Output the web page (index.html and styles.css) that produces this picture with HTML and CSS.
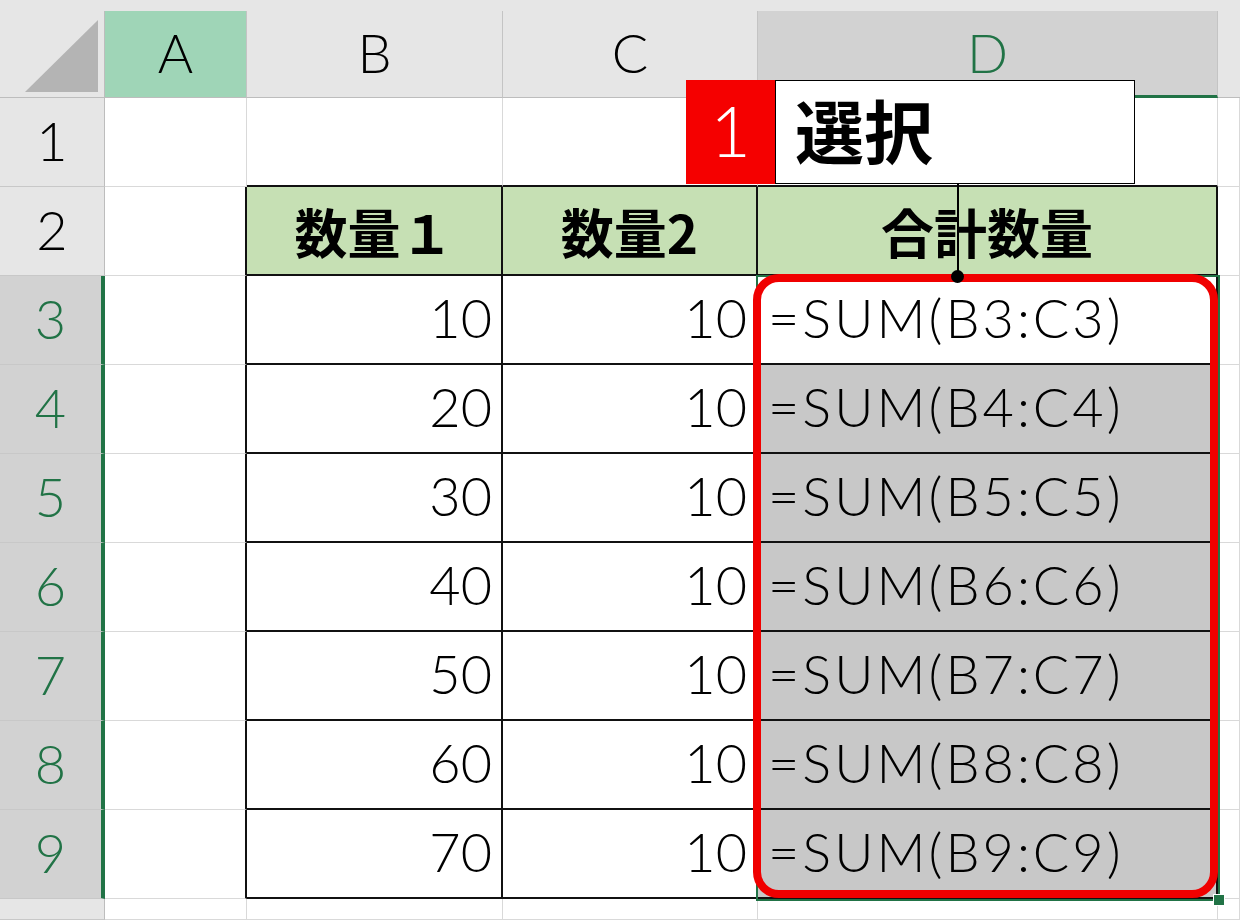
FILE: index.html
```html
<!DOCTYPE html>
<html lang="ja">
<head>
<meta charset="utf-8">
<title>SUM</title>
<link rel="stylesheet" href="styles.css">
</head>
<body>
<div class="sheet">
  <div class="grid">
    <div class="corner"><svg width="104" height="86" viewBox="0 0 104 86"><polygon points="25,81 98,9 98,81" fill="#b4b4b4"/></svg></div>
    <div class="ch ch-a">A</div>
    <div class="ch">B</div>
    <div class="ch">C</div>
    <div class="ch ch-sel">D</div>
    <div class="ch ch-e"></div>

    <div class="rh">1</div>
    <div class="c"></div>
    <div class="c bb"></div>
    <div class="c bb"></div>
    <div class="c bb"></div>
    <div class="c"></div>

    <div class="rh">2</div>
    <div class="c br"></div>
    <div class="c t th">数量１</div>
    <div class="c t th">数量2</div>
    <div class="c t th">合計数量</div>
    <div class="c"></div>

    <div class="rh rh-sel">3</div>
    <div class="c br"></div>
    <div class="c t num">10</div>
    <div class="c t num">10</div>
    <div class="c t f">=SUM(B3:C3)</div>
    <div class="c"></div>

    <div class="rh rh-sel">4</div>
    <div class="c br"></div>
    <div class="c t num">20</div>
    <div class="c t num">10</div>
    <div class="c t f g">=SUM(B4:C4)</div>
    <div class="c"></div>

    <div class="rh rh-sel">5</div>
    <div class="c br"></div>
    <div class="c t num">30</div>
    <div class="c t num">10</div>
    <div class="c t f g">=SUM(B5:C5)</div>
    <div class="c"></div>

    <div class="rh rh-sel">6</div>
    <div class="c br"></div>
    <div class="c t num">40</div>
    <div class="c t num">10</div>
    <div class="c t f g">=SUM(B6:C6)</div>
    <div class="c"></div>

    <div class="rh rh-sel">7</div>
    <div class="c br"></div>
    <div class="c t num">50</div>
    <div class="c t num">10</div>
    <div class="c t f g">=SUM(B7:C7)</div>
    <div class="c"></div>

    <div class="rh rh-sel">8</div>
    <div class="c br"></div>
    <div class="c t num">60</div>
    <div class="c t num">10</div>
    <div class="c t f g">=SUM(B8:C8)</div>
    <div class="c"></div>

    <div class="rh rh-sel">9</div>
    <div class="c br"></div>
    <div class="c t num">70</div>
    <div class="c t num">10</div>
    <div class="c t f g">=SUM(B9:C9)</div>
    <div class="c"></div>

    <div class="rh"></div>
    <div class="c"></div>
    <div class="c"></div>
    <div class="c"></div>
    <div class="c"></div>
    <div class="c"></div>
  </div>

  <div class="sel-box"><span class="handle"></span></div>
  <div class="red-box"></div>
  <div class="leader"></div>
  <div class="dot"></div>
  <div class="callout">
    <div class="callout-num">1</div>
    <div class="callout-text">選択</div>
  </div>
</div>
</body>
</html>
```

FILE: styles.css
```css
* {
  box-sizing: border-box;
}

html, body {
  margin: 0;
  padding: 0;
  width: 1240px;
  height: 920px;
  overflow: hidden;
  background: #e6e6e6;
}

.sheet {
  position: relative;
  width: 1240px;
  height: 920px;
  padding-top: 11px;
  font-family: Lato, "Noto Sans CJK JP", sans-serif;
  font-weight: 300;
  color: #000;
}

.grid {
  display: grid;
  grid-template-columns: 105px 142px 256px 255px 460px 1fr;
  grid-template-rows: 87px repeat(9, 89px) 1fr;
  height: 909px;
}

.corner {
  background: #e6e6e6;
  border-right: 1px solid #bdbdbd;
  border-bottom: 1px solid #bdbdbd;
}

.corner svg {
  display: block;
}

.ch {
  display: flex;
  align-items: center;
  justify-content: center;
  background: #e6e6e6;
  border-right: 1px solid #c4c4c4;
  border-bottom: 1px solid #bdbdbd;
  font-size: 54px;
  padding-bottom: 4px;
}

.ch-a {
  background: #9fd5b7;
}

.ch-sel {
  background: #d2d2d2;
  color: #217346;
  border-bottom: 3px solid #217346;
  padding-bottom: 2px;
}

.ch-e {
  border-right: none;
}

.rh {
  display: flex;
  align-items: center;
  justify-content: center;
  background: #e6e6e6;
  border-right: 1px solid #bdbdbd;
  border-bottom: 1px solid #c8c8c8;
  font-size: 54px;
  padding-bottom: 4px;
}

.rh-sel {
  background: #d2d2d2;
  color: #217346;
  border-right: 4px solid #217346;
}

.c {
  background: #fff;
  border-right: 1px solid #d9d9d9;
  border-bottom: 1px solid #d9d9d9;
  display: flex;
  align-items: center;
  font-size: 54px;
  white-space: nowrap;
  overflow: hidden;
}

.bb {
  border-bottom: 2px solid #111;
}

.br {
  border-right: 2px solid #111;
}

.t {
  border-right: 2px solid #111;
  border-bottom: 2px solid #111;
}

.th {
  background: #c6e0b4;
  justify-content: center;
  font-family: "Noto Sans CJK JP", sans-serif;
  font-weight: 700;
  font-size: 53px;
}

.num {
  justify-content: flex-end;
  padding-right: 9px;
  padding-bottom: 4px;
}

.f {
  padding-left: 10px;
  padding-bottom: 4px;
  letter-spacing: 3px;
}

.g {
  background: #c8c8c8;
}

.sel-box {
  position: absolute;
  left: 756px;
  top: 275px;
  width: 464px;
  height: 626px;
  border: 2px solid #217346;
}

.handle {
  position: absolute;
  right: -7px;
  bottom: -7px;
  width: 12px;
  height: 12px;
  background: #217346;
  border: 1px solid #fff;
}

.red-box {
  position: absolute;
  left: 753px;
  top: 274px;
  width: 465px;
  height: 624px;
  border: 8px solid #f00000;
  border-radius: 26px;
}

.leader {
  position: absolute;
  left: 957px;
  top: 184px;
  width: 1.5px;
  height: 92px;
  background: #000;
}

.dot {
  position: absolute;
  left: 951px;
  top: 270px;
  width: 13px;
  height: 13px;
  border-radius: 50%;
  background: #000;
}

.callout {
  position: absolute;
  left: 686px;
  top: 80px;
  height: 104px;
  display: flex;
}

.callout-num {
  width: 89px;
  background: #f50000;
  color: #fff;
  display: flex;
  align-items: center;
  justify-content: center;
  font-family: Lato, sans-serif;
  font-weight: 300;
  font-size: 70px;
  padding-bottom: 4px;
}

.callout-text {
  width: 360px;
  background: #fff;
  border: 1.5px solid #000;
  display: flex;
  align-items: center;
  padding-left: 19px;
  font-family: "Noto Sans CJK JP", sans-serif;
  font-weight: 700;
  font-size: 69px;
  padding-bottom: 6px;
}
```
